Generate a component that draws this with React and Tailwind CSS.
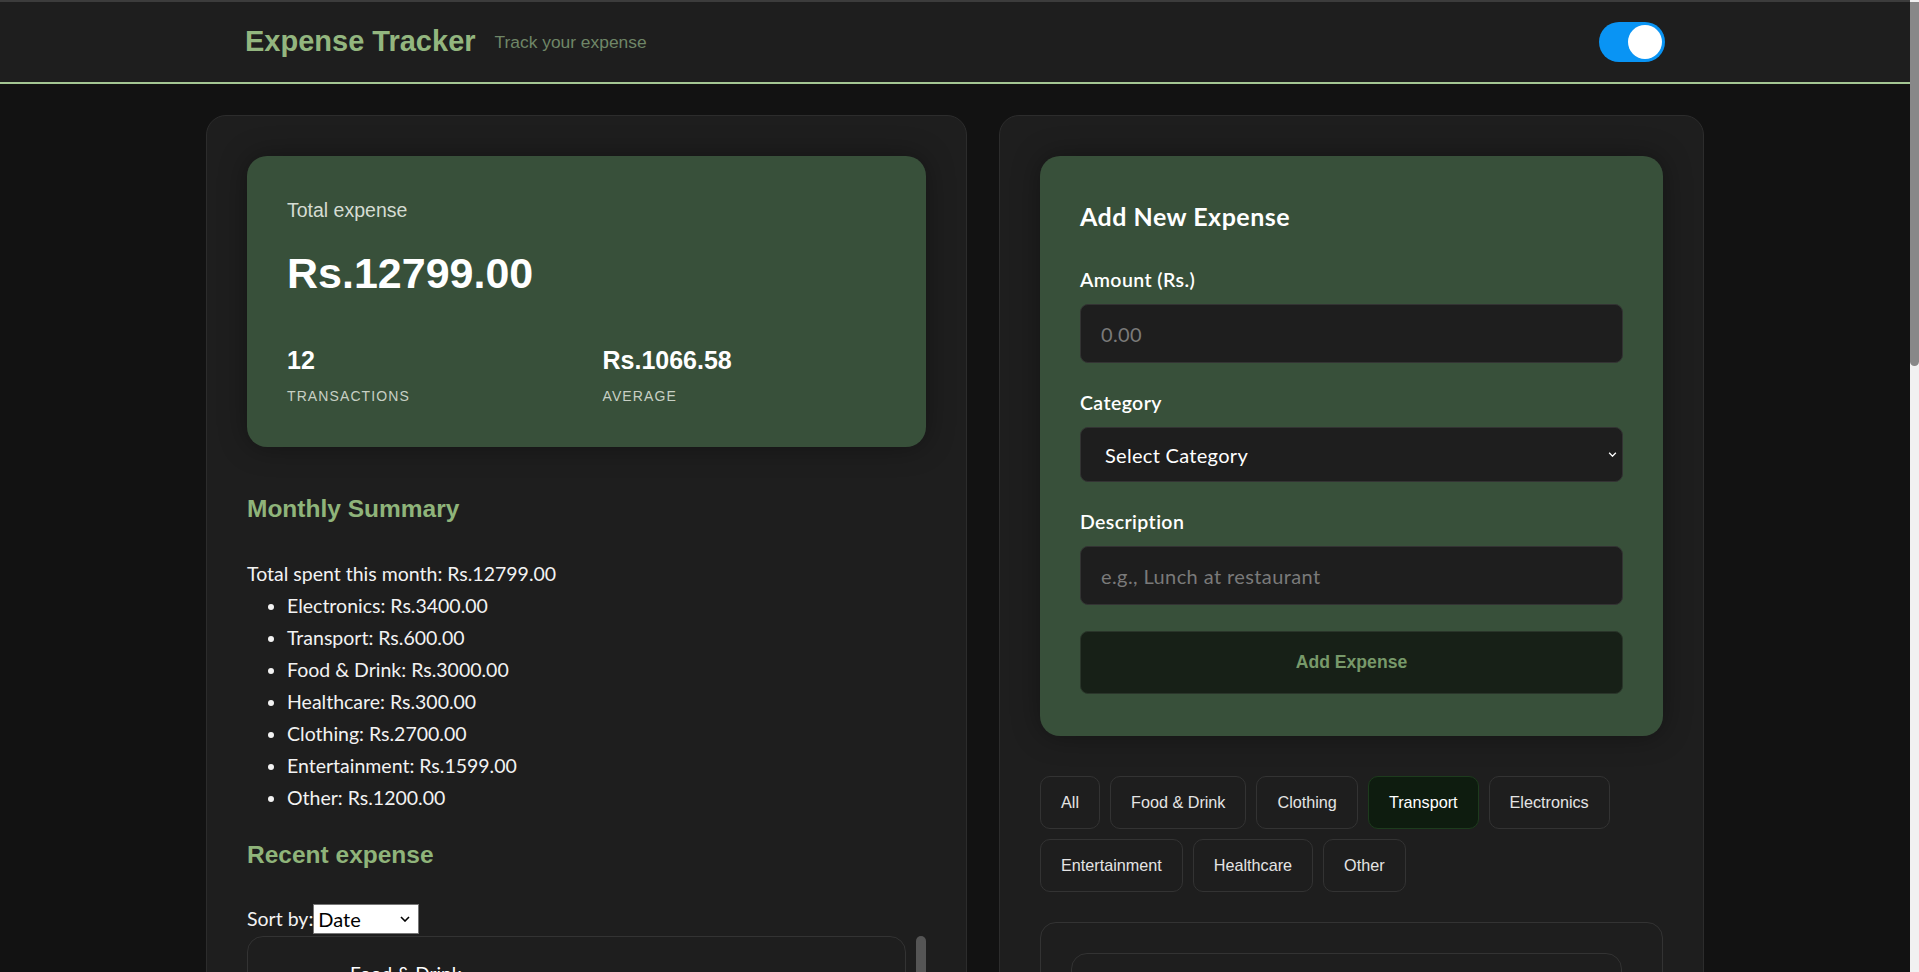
import React from "react";

const ARIAL = "font-['Liberation_Sans',Arial,sans-serif]";
const UI = "font-['Lato','Noto_Sans',sans-serif]";

const summary = [
  ["Electronics", "3400.00"],
  ["Transport", "600.00"],
  ["Food & Drink", "3000.00"],
  ["Healthcare", "300.00"],
  ["Clothing", "2700.00"],
  ["Entertainment", "1599.00"],
  ["Other", "1200.00"],
];

const filters = [
  "All",
  "Food & Drink",
  "Clothing",
  "Transport",
  "Electronics",
  "Entertainment",
  "Healthcare",
  "Other",
];

const expenses = [
  { cat: "Food & Drink", desc: "Lunch at restaurant", date: "2025-06-28", amount: "500.00" },
  { cat: "Electronics", desc: "Headphones", date: "2025-06-27", amount: "900.00" },
  { cat: "Transport", desc: "Bus pass", date: "2025-06-26", amount: "350.00" },
  { cat: "Clothing", desc: "Jacket", date: "2025-06-24", amount: "1500.00" },
  { cat: "Entertainment", desc: "Concert tickets", date: "2025-06-22", amount: "1599.00" },
  { cat: "Food & Drink", desc: "Groceries", date: "2025-06-20", amount: "1800.00" },
  { cat: "Healthcare", desc: "Pharmacy", date: "2025-06-18", amount: "300.00" },
  { cat: "Other", desc: "Gift", date: "2025-06-15", amount: "1200.00" },
  { cat: "Clothing", desc: "Shoes", date: "2025-06-12", amount: "1200.00" },
  { cat: "Transport", desc: "Taxi", date: "2025-06-10", amount: "250.00" },
  { cat: "Electronics", desc: "Keyboard", date: "2025-06-07", amount: "2500.00" },
  { cat: "Food & Drink", desc: "Dinner with friends", date: "2025-06-03", amount: "700.00" },
];

function Chevron({ className }) {
  return (
    <svg viewBox="0 0 10 6" className={className} fill="none" stroke="currentColor" strokeWidth="1.6">
      <path d="M1 1l4 4 4-4" />
    </svg>
  );
}

function Field({ label, children }) {
  return (
    <div>
      <label className={`${UI} mb-[11px] block text-[19.5px] font-semibold leading-[26px] tracking-[0.4px] text-white`}>
        {label}
      </label>
      {children}
    </div>
  );
}

function ExpenseRow({ item }) {
  return (
    <div className="flex items-center justify-between rounded-[16px] border border-[#333] bg-[#1e1e1e] p-[24px]">
      <div className="flex items-center gap-[30px]">
        <div className="flex h-[48px] w-[48px] shrink-0 items-center justify-center rounded-full bg-[#38503a] text-[18px] font-bold text-white">
          {item.cat[0]}
        </div>
        <div>
          <p className={`${UI} text-[19px] leading-[26px] text-white`}>{item.cat}</p>
          <p className={`${UI} text-[15px] leading-[22px] text-[#bdbdbd]`}>{item.desc}</p>
          <p className={`${UI} text-[14px] leading-[22px] text-[#8a8a8a]`}>{item.date}</p>
        </div>
      </div>
      <p className={`${ARIAL} text-[20px] font-bold text-[#8fb47a]`}>Rs.{item.amount}</p>
    </div>
  );
}

export default function App() {
  return (
    <div className="flex h-screen bg-[#121212]">
      <div className="h-full flex-1 overflow-y-auto [scrollbar-width:none]">
        <header className="border-t-2 border-b-2 border-t-[#3c3c3c] border-b-[#a4c693] bg-[#1e1e1e]">
          <div className="mx-auto flex h-[80px] w-[1500px] items-center justify-between px-10">
            <div className="flex items-center gap-[19px]">
              <h1 className={`${ARIAL} text-[29px] font-bold text-[#93b67f]`}>Expense Tracker</h1>
              <span className={`${ARIAL} text-[17.4px] text-[#6f8667]`}>Track your expense</span>
            </div>
            <button className="flex h-[40px] w-[66px] items-center justify-end rounded-full bg-[#0994f4] p-[3px]">
              <span className="h-[34px] w-[34px] rounded-full bg-white" />
            </button>
          </div>
        </header>

        <main className="mx-auto mt-[31px] grid w-[1498px] grid-cols-[761px_705px] items-start gap-8 pb-8">
          {/* left column */}
          <section className="rounded-[20px] border border-[#2c2c2c] bg-[#1e1e1e] p-10">
            <div className={`${ARIAL} rounded-[20px] bg-[#38503a] p-10 shadow-[0_0_28px_rgba(0,0,0,0.35)]`}>
              <p className="text-[19.5px] leading-[28.8px] text-[#d5dcd3]">Total expense</p>
              <p className="mt-[24.6px] text-[43px] font-bold leading-[49.4px] text-white">Rs.12799.00</p>
              <div className="mt-[48px] grid grid-cols-2 gap-8">
                <div>
                  <p className="text-[25px] font-bold leading-[27.6px] text-white">12</p>
                  <p className="mt-[12px] text-[14px] leading-[21px] tracking-[1.1px] text-[#c8d0c5]">TRANSACTIONS</p>
                </div>
                <div>
                  <p className="text-[25px] font-bold leading-[27.6px] text-white">Rs.1066.58</p>
                  <p className="mt-[12px] text-[14px] leading-[21px] tracking-[1.1px] text-[#c8d0c5]">AVERAGE</p>
                </div>
              </div>
            </div>

            <h2 className={`${ARIAL} mt-12 text-[24.5px] font-bold leading-[27.6px] text-[#8fb47a]`}>Monthly Summary</h2>
            <div className={`${UI} mt-[35px] text-[19.5px] leading-[32px] text-[#f2f2f2]`}>
              <p>Total spent this month: Rs.12799.00</p>
              <ul className="list-disc pl-10">
                {summary.map(([name, amt]) => (
                  <li key={name}>
                    {name}: Rs.{amt}
                  </li>
                ))}
              </ul>
            </div>

            <h2 className={`${ARIAL} mt-[27px] text-[24.5px] font-bold leading-[27.6px] text-[#8fb47a]`}>Recent expense</h2>
            <div className={`${UI} mt-[35px] flex items-center text-[19.5px] text-[#f2f2f2]`}>
              <span>Sort by:</span>
              <div className="relative">
                <select className={`${UI} h-[30px] w-[106px] appearance-none border border-[#767676] bg-white pl-[4px] text-[20px] leading-[28px] text-black`}>
                  <option>Date</option>
                  <option>Amount</option>
                  <option>Category</option>
                </select>
                <Chevron className="pointer-events-none absolute right-[9px] top-[12px] h-[6px] w-[10px] text-black" />
              </div>
            </div>

            <div className="mt-[2px] flex h-[520px] gap-[10px]">
              <div className="flex-1 overflow-y-auto [scrollbar-width:none]">
                <div className="flex flex-col gap-[15px]">
                  {expenses.map((e, i) => (
                    <ExpenseRow key={i} item={e} />
                  ))}
                </div>
              </div>
              <div className="w-[10px]">
                <div className="h-[160px] rounded-[5px] bg-[#555]" />
              </div>
            </div>
          </section>

          {/* right column */}
          <section className="rounded-[20px] border border-[#2c2c2c] bg-[#1e1e1e] p-10">
            <div className="rounded-[20px] bg-[#38503a] p-10 pb-[42px] shadow-[0_0_28px_rgba(0,0,0,0.35)]">
              <h2 className={`${UI} mt-[5px] text-[25px] font-bold leading-[30px] tracking-[0.5px] text-white`}>
                Add New Expense
              </h2>
              <div className="mt-[36px] flex flex-col gap-[27px]">
                <Field label="Amount (Rs.)">
                  <input
                    type="number"
                    placeholder="0.00"
                    className={`${UI} h-[59px] w-full rounded-[8px] border border-[#333] bg-[#1e1e1e] px-5 text-[20px] tracking-[0.4px] text-white outline-none placeholder:text-[#7a7a7a]`}
                  />
                </Field>
                <Field label="Category">
                  <div className="relative">
                    <select className={`${UI} h-[55px] w-full appearance-none rounded-[8px] border border-[#333] bg-[#1e1e1e] pl-[24px] text-[20px] tracking-[0.3px] text-white outline-none`}>
                      <option>Select Category</option>
                      {filters.slice(1).map((f) => (
                        <option key={f}>{f}</option>
                      ))}
                    </select>
                    <Chevron className="pointer-events-none absolute right-[6px] top-[25px] h-[5px] w-[9px] text-white" />
                  </div>
                </Field>
                <Field label="Description">
                  <input
                    type="text"
                    placeholder="e.g., Lunch at restaurant"
                    className={`${UI} h-[59px] w-full rounded-[8px] border border-[#333] bg-[#1e1e1e] px-5 text-[20px] tracking-[0.4px] text-white outline-none placeholder:text-[#7a7a7a]`}
                  />
                </Field>
              </div>
              <button className={`${ARIAL} mt-[26px] h-[63px] w-full rounded-[8px] border border-[#2a352a] bg-[#172017] text-[17.6px] font-bold text-[#77996a]`}>
                Add Expense
              </button>
            </div>

            <div className="mt-10 flex flex-wrap gap-[10px]">
              {filters.map((f) => (
                <button
                  key={f}
                  className={
                    f === "Transport"
                      ? `${ARIAL} rounded-[10px] border border-[#1d3b1d] bg-[#0e1c0f] px-5 py-4 text-[16.2px] leading-[19px] text-white`
                      : `${ARIAL} rounded-[10px] border border-[#333] bg-[#1e1e1e] px-5 py-4 text-[16.2px] leading-[19px] text-[#e4e4e4]`
                  }
                >
                  {f}
                </button>
              ))}
            </div>

            <div className="mt-[30px] rounded-[16px] border border-[#333] p-[30px]">
              <div className="mr-[10px] flex flex-col gap-[15px]">
                {expenses.map((e, i) => (
                  <ExpenseRow key={i} item={e} />
                ))}
              </div>
            </div>
          </section>
        </main>
      </div>

      {/* page scrollbar */}
      <div className="h-full w-[9px] shrink-0 bg-[#f1f1f1] pt-[2px]">
        <div className="h-[364px] rounded-b-[5px] bg-[#888]" />
      </div>
    </div>
  );
}
